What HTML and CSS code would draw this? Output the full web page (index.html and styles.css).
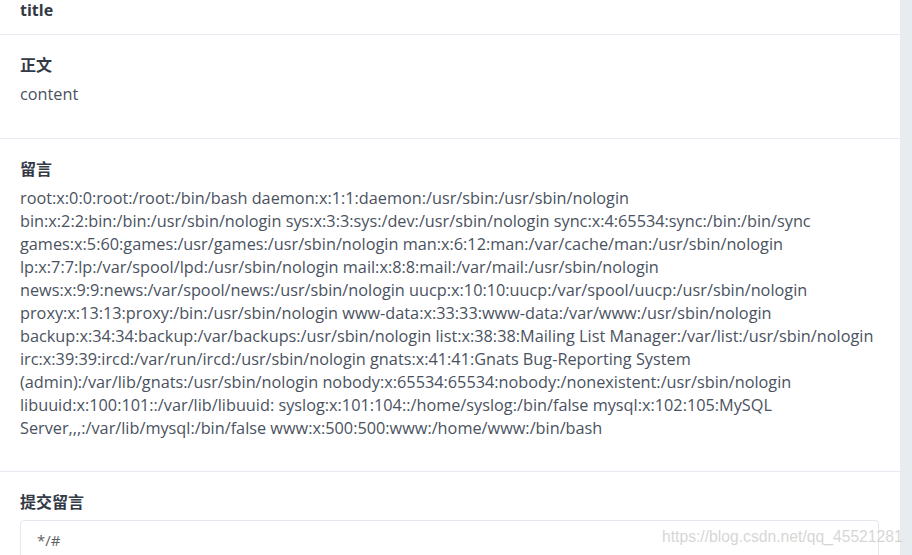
FILE: index.html
```html
<!DOCTYPE html>
<html>
<head>
<meta charset="utf-8">
<link rel="stylesheet" href="styles.css">
</head>
<body>
<div class="page">
  <div class="card">
    <div class="head"><h3 class="title">title</h3></div>
    <div class="section">
      <h4 class="label">正文</h4>
      <p class="text">content</p>
    </div>
    <div class="section">
      <h4 class="label">留言</h4>
      <p class="text log">root:x:0:0:root:/root:/bin/bash daemon:x:1:1:daemon:/usr/sbin:/usr/sbin/nologin bin:x:2:2:bin:/bin:/usr/sbin/nologin sys:x:3:3:sys:/dev:/usr/sbin/nologin sync:x:4:65534:sync:/bin:/bin/sync games:x:5:60:games:/usr/games:/usr/sbin/nologin man:x:6:12:man:/var/cache/man:/usr/sbin/nologin lp:x:7:7:lp:/var/spool/lpd:/usr/sbin/nologin mail:x:8:8:mail:/var/mail:/usr/sbin/nologin news:x:9:9:news:/var/spool/news:/usr/sbin/nologin uucp:x:10:10:uucp:/var/spool/uucp:/usr/sbin/nologin proxy:x:13:13:proxy:/bin:/usr/sbin/nologin www-data:x:33:33:www-data:/var/www:/usr/sbin/nologin backup:x:34:34:backup:/var/backups:/usr/sbin/nologin list:x:38:38:Mailing List Manager:/var/list:/usr/sbin/nologin irc:x:39:39:ircd:/var/run/ircd:/usr/sbin/nologin gnats:x:41:41:Gnats Bug-Reporting System (admin):/var/lib/gnats:/usr/sbin/nologin nobody:x:65534:65534:nobody:/nonexistent:/usr/sbin/nologin libuuid:x:100:101::/var/lib/libuuid: syslog:x:101:104::/home/syslog:/bin/false mysql:x:102:105:MySQL Server,,,:/var/lib/mysql:/bin/false www:x:500:500:www:/home/www:/bin/bash</p>
    </div>
    <div class="section form">
      <h4 class="label">提交留言</h4>
      <div class="input">*/#</div>
    </div>
  </div>
  <div class="scrollbar"></div>
  <div class="watermark">https://blog.csdn.net/qq_45521281</div>
</div>
</body>
</html>
```
FILE: styles.css
```css
html, body {
  margin: 0;
  padding: 0;
  background: #fff;
}
body {
  font-family: "Open Sans", "Noto Sans CJK SC", sans-serif;
  color: #4a5260;
  overflow: hidden;
}
.page {
  position: relative;
  display: flex;
  width: 912px;
  height: 555px;
  overflow: hidden;
}
.card {
  width: 900px;
  flex: none;
  background: #fff;
}
.head {
  height: 34px;
  border-bottom: 1px solid #e6eaf0;
  padding: 0 20px;
  margin-top: -8px;
  padding-top: 8px;
}
.title {
  margin: 0;
  font-size: 16px;
  font-weight: 700;
  line-height: 20px;
  color: #333a45;
}
.section {
  padding: 20px 20px 0;
  border-bottom: 1px solid #e6eaf0;
}
.label {
  margin: 0 0 8px;
  font-size: 16px;
  font-weight: 700;
  line-height: 20px;
  color: #333a45;
}
.text {
  margin: 0;
  font-size: 16.27px;
  line-height: 23px;
  padding-bottom: 32px;
}
.text.log {
  padding-bottom: 31px;
}
.form {
  border-bottom: none;
}
.input {
  margin-top: 8px;
  width: 859px;
  height: 40px;
  box-sizing: border-box;
  border: 1px solid #e4e8ee;
  border-radius: 4px;
  padding: 7px 16px;
  font-size: 15px;
  line-height: 24px;
  color: #606266;
}
.scrollbar {
  width: 12px;
  flex: none;
  background: #e9ecef;
}
.watermark {
  position: absolute;
  left: 662px;
  top: 527px;
  font-family: "Liberation Sans", Arial, sans-serif;
  font-size: 15.7px;
  line-height: 20px;
  color: rgba(200, 200, 200, 0.75);
  white-space: nowrap;
}
```
